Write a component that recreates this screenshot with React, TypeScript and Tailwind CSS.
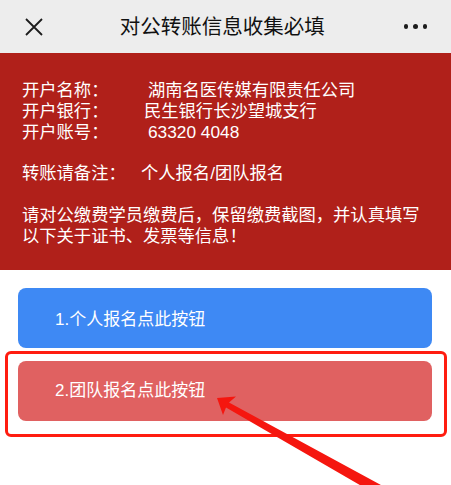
import * as React from "react";

const font = { fontFamily: '"Liberation Sans", "Noto Sans CJK SC", sans-serif' };

function Row({ label, value, w }: { label: string; value: string; w: string }) {
  return (
    <div className="flex">
      <span className={`shrink-0 ${w}`}>{label}</span>
      <span>{value}</span>
    </div>
  );
}

export default function App() {
  return (
    <div className="relative w-[451px] h-[485px] overflow-hidden bg-white" style={font}>
      {/* Top bar */}
      <div className="flex items-center h-[53px] bg-[#ededed] px-[25px]">
        <svg width="18" height="18" viewBox="0 0 18 18" className="shrink-0">
          <path d="M1 1L17 17M17 1L1 17" stroke="#1c1c1c" strokeWidth="1.8" />
        </svg>
        <div className="flex-1 text-center text-[20.5px] text-[#111] pr-[2px] pt-[1px]">对公转账信息收集必填</div>
        <div className="flex gap-[5px] items-center mr-[-1px]">
          <span className="w-[4.5px] h-[4.5px] rounded-full bg-[#1c1c1c]" />
          <span className="w-[4.5px] h-[4.5px] rounded-full bg-[#1c1c1c]" />
          <span className="w-[4.5px] h-[4.5px] rounded-full bg-[#1c1c1c]" />
        </div>
      </div>

      {/* Transfer info */}
      <div className="bg-[#b0201a] text-white text-[17.3px] leading-[20.8px] pt-[27px] pb-[24px] pl-[22px] h-[217px]">
        <Row label="开户名称：" value="湖南名医传媒有限责任公司" w="w-[126px]" />
        <Row label="开户银行：" value="民生银行长沙望城支行" w="w-[122px]" />
        <Row label="开户账号：" value="63320 4048" w="w-[126px]" />
        <div className="h-[20.8px]" />
        <Row label="转账请备注：" value="个人报名/团队报名" w="w-[119px]" />
        <div className="h-[20.8px]" />
        <p>请对公缴费学员缴费后，保留缴费截图，并认真填写</p>
        <p>以下关于证书、发票等信息！</p>
      </div>

      {/* Buttons */}
      <div className="flex flex-col gap-[12.5px] px-[18px] pt-[18px] w-[450px]">
        <button className="h-[60px] rounded-[8px] bg-[#3e89f4] text-left pl-[37px] pt-[3px] text-white text-[17px]">
          1.个人报名点此按钮
        </button>
        <button className="h-[60px] rounded-[8px] bg-[#e06161] text-left pl-[37px] text-white text-[17px]">
          2.团队报名点此按钮
        </button>
      </div>

      {/* Annotation */}
      <div className="absolute left-[5px] top-[351px] w-[442px] h-[86px] border-[3.5px] border-[#ff1c10] rounded-[6px]" />
      <svg className="absolute left-0 top-0" width="451" height="485" viewBox="0 0 451 485">
        <polygon
          points="217,398 236,396.5 229,402.5 392,491 384,499 226,407.5 223,415"
          fill="#f5160f"
        />
      </svg>
    </div>
  );
}
